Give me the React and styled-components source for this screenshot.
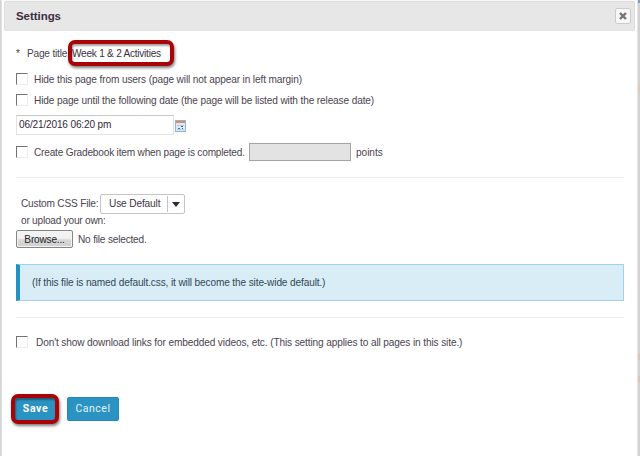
import React from "react";
import styled, { createGlobalStyle } from "styled-components";

const GlobalStyle = createGlobalStyle`
  * { box-sizing: border-box; }
  body { margin: 0; background: #d8d8d8; overflow: hidden; }
`;

const Page = styled.div`
  display: grid;
  grid-template-columns: 1px 637px 2px;
  height: 456px;
  background: #fff;
  font-family: "Liberation Sans", Arial, sans-serif;
  font-size: 10.1px;
  line-height: 14px;
  color: #4b4450;
`;

const Backdrop = styled.div`
  background: ${(p) => (p.$right ? "linear-gradient(#7f9cc4 0 3px, #d2d2d2 3px 85px, #dcccbd 85px 93px, #d2d2d2 93px 353px, #dcc5b3 353px 360px, #d2d2d2 360px 376px, #dcc5b3 376px 383px, #d2d2d2 383px)" : "#d5d5d5")};
`;

const Dialog = styled.main`
  display: flex;
  flex-direction: column;
  height: 456px;
  border-left: 1px solid #dedede;
  border-right: 1px solid #e4e4e4;
  border-top: 1px solid #f8f8f8;
  background: #fff;
`;

const Header = styled.header`
  display: flex;
  align-items: center;
  justify-content: space-between;
  flex: none;
  height: 30px;
  margin: 0 2px;
  padding: 0 3px 0 11px;
  border: 1px solid #dcdcdc;
  border-bottom-color: #e2e2e2;
  border-radius: 2px;
  background: #e7e7e7;
`;

const Title = styled.h1`
  margin: 0;
  font-size: 11.5px;
  line-height: 16px;
  letter-spacing: -0.05px;
  color: #3b2f3f;
`;

const CloseButton = styled.button`
  display: flex;
  align-items: center;
  justify-content: center;
  width: 16px;
  height: 16px;
  padding: 0;
  border: 1px solid #cbcbcb;
  border-radius: 2px;
  background: #f7f7f7;
`;

const Form = styled.div`
  display: flex;
  flex-direction: column;
  padding: 9px 13px 0 14px;
`;

const Row = styled.div`
  display: flex;
  align-items: center;
  flex: none;
  height: ${(p) => p.$h}px;
  margin-top: ${(p) => p.$top || 0}px;
  padding-left: ${(p) => p.$indent || 0}px;
`;

const Label = styled.span`
  flex: none;
  width: ${(p) => (p.$w ? `${p.$w}px` : "auto")};
  padding-top: ${(p) => (p.$flat ? 0 : 2)}px;
  white-space: pre;
  letter-spacing: ${(p) => p.$track ?? -0.12}px;
  margin-left: ${(p) => p.$gap || 0}px;
  color: ${(p) => p.$color || "inherit"};
`;

const Ring = styled.div`
  display: flex;
  align-items: center;
  flex: none;
  width: ${(p) => p.$w}px;
  height: ${(p) => p.$h}px;
  margin-left: ${(p) => p.$left || 0}px;
  border: 4px solid #a90307;
  border-radius: 7px;
  box-shadow: 1px 2px 3px rgba(0, 0, 0, 0.5), inset 1px 2px 2px rgba(0, 0, 0, 0.35);
  background: ${(p) => p.$fill || "#fff"};
`;

const Check = styled.span`
  flex: none;
  width: 12px;
  height: 12px;
  border: 1px solid;
  border-color: #777078 #ececec #ececec #777078;
  background: #fff;
`;

const DateField = styled.div`
  display: flex;
  align-items: center;
  width: 158px;
  height: 20px;
  padding-left: 2px;
  border: 1px solid #e2e2e2;
  border-top-color: #c9c9c9;
  color: #332b38;
`;

const CalendarIcon = styled.svg`
  flex: none;
  margin: 1px 0 0 0;
`;

const PointsField = styled.div`
  width: 102px;
  height: 18px;
  margin: 0 5px 0 0;
  border: 1px solid #a3a3a3;
  background: #e3e3e3;
`;

const Divider = styled.div`
  flex: none;
  height: 1px;
  margin-top: ${(p) => p.$top}px;
  background: #ececec;
`;

const Select = styled.div`
  display: flex;
  align-items: center;
  width: 85px;
  height: 20px;
  padding-left: 8px;
  border: 1px solid #c4c4c4;
  border-radius: 2px;
  color: #3e3544;
`;

const Arrow = styled.span`
  display: flex;
  align-items: center;
  justify-content: center;
  width: 17px;
  height: 16px;
  margin-left: auto;
  border-left: 1px solid #c4c4c4;
`;

const BrowseButton = styled.button`
  width: 57px;
  height: 18px;
  padding: 2px 0 0;
  border: 1px solid #858585;
  border-radius: 2px;
  box-shadow: inset 0 0 0 1px #f4f4f4;
  background: linear-gradient(#f2f2f2 45%, #d8d8d8 55%, #cfcfcf);
  font: 10.1px/14px "Liberation Sans", Arial, sans-serif;
  letter-spacing: -0.2px;
  color: #221c26;
`;

const Notice = styled.aside`
  display: flex;
  align-items: center;
  height: 37px;
  margin-top: 16px;
  padding: 0 0 2px 12px;
  border: 1px solid #9fd3ec;
  border-left: 4px solid #2591c1;
  background: #d9edf6;
  color: #31475a;
`;

const ActionButton = styled.button`
  flex: none;
  width: ${(p) => p.$w}px;
  height: ${(p) => p.$h}px;
  margin-left: ${(p) => p.$gap || 0}px;
  padding: 0;
  border: ${(p) => (p.$primary ? "0" : "1px solid #2589b5")};
  border-radius: 2px;
  background: ${(p) => (p.$primary ? "transparent" : "#2b93c1")};
  font: ${(p) => (p.$primary ? 700 : 400)} 10.5px/14px Roboto, sans-serif;
  letter-spacing: ${(p) => p.$track}px;
  color: ${(p) => (p.$primary ? "#fff" : "#e3f3fa")};
`;

export default function App() {
  return (
    <>
      <GlobalStyle />
      <Page>
        <Backdrop />
        <Dialog>
          <Header>
            <Title>Settings</Title>
            <CloseButton aria-label="Close">
              <svg width="8" height="8" viewBox="0 0 8 8">
                <path d="M1 1L7 7M7 1L1 7" stroke="#786f79" strokeWidth="2.4" />
              </svg>
            </CloseButton>
          </Header>
          <Form>
            <Row $h={26}>
              <Label $w={4}>*</Label>
              <Label $gap={7} $w={41} $track={-0.2}>Page title</Label>
              <Ring $w={106} $h={26}>
                <Label $color="#3b3040" $track={-0.25}>Week 1 &amp; 2 Activities</Label>
              </Ring>
            </Row>
            <Row $h={20} $top={3}>
              <Check />
              <Label $gap={6}>Hide this page from users (page will not appear in left margin)</Label>
            </Row>
            <Row $h={20} $top={1}>
              <Check />
              <Label $gap={6} $track={-0.13}>Hide page until the following date (the page will be listed with the release date)</Label>
            </Row>
            <Row $h={20} $top={5}>
              <DateField>
                <Label $track={-0.17} $flat>06/21/2016 06:20 pm</Label>
              </DateField>
              <CalendarIcon width="12" height="12" viewBox="0 0 12 12">
                <rect x="1.5" y="0.5" width="10" height="11" fill="#dceaf6" stroke="#8fb4d4" />
                <path d="M2 2H11" stroke="#d9925f" strokeWidth="2" />
                <path d="M3 5.5H10M3 9.5H10" stroke="#b5cde2" />
                <path d="M7 6.5H9M4 8.5H6M8 8.5H9" stroke="#4a6c90" />
              </CalendarIcon>
            </Row>
            <Row $h={20} $top={7}>
              <Check />
              <Label $gap={6} $w={215} $track={-0.19}>Create Gradebook item when page is completed.</Label>
              <PointsField />
              <Label $track={-0.05}>points</Label>
            </Row>
            <Divider $top={15} />
            <Row $h={20} $top={16} $indent={5}>
              <Label $w={79} $track={-0.18} $flat>Custom CSS File:</Label>
              <Select>
                <Label $flat>Use Default</Label>
                <Arrow>
                  <svg width="8" height="5" viewBox="0 0 8 5">
                    <path d="M0 0H8L4 5Z" fill="#332735" />
                  </svg>
                </Arrow>
              </Select>
            </Row>
            <Row $h={14} $indent={5}>
              <Label $track={-0.22} $flat>or upload your own:</Label>
            </Row>
            <Row $h={18} $top={2}>
              <BrowseButton>Browse...</BrowseButton>
              <Label $gap={5} $track={-0.19}>No file selected.</Label>
            </Row>
            <Notice>
              <Label $track={-0.13}>(If this file is named default.css, it will become the site-wide default.)</Label>
            </Notice>
            <Divider $top={16} />
            <Row $h={20} $top={14}>
              <Check />
              <Label $gap={8} $track={-0.12}>Don't show download links for embedded videos, etc. (This setting applies to all pages in this site.)</Label>
            </Row>
            <Row $h={30} $top={42}>
              <Ring $w={48} $h={30} $left={-5} $fill="#2b93c1">
                <ActionButton $primary $w={41} $h={22} $track={0.6}>Save</ActionButton>
              </Ring>
              <ActionButton $w={52} $h={24} $gap={8} $track={0.5}>Cancel</ActionButton>
            </Row>
          </Form>
        </Dialog>
        <Backdrop $right />
      </Page>
    </>
  );
}
